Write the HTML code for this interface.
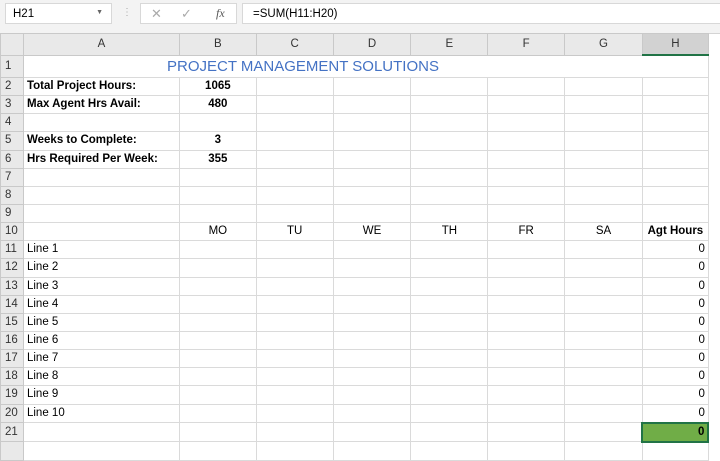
<!DOCTYPE html>
<html><head><style>
body{margin:0;width:720px;height:448px;overflow:hidden;background:#fff;font-family:"Liberation Sans",sans-serif;font-size:11.5px;color:#000;position:relative}
.top{position:absolute;left:0;top:0;width:720px;height:33px;background:#f3f3f3;border-bottom:1px solid #d4d4d4}
.nb{position:absolute;left:5px;top:3px;width:107px;height:21px;background:#fff;border:1px solid #d8d8d8;box-sizing:border-box;padding:4px 0 0 7px;font-size:11.5px}
.fb{position:absolute;left:140px;top:3px;width:97px;height:21px;background:#fff;border:1px solid #d8d8d8;box-sizing:border-box}
.fx{position:absolute;left:242px;top:3px;width:480px;height:21px;background:#fff;border:1px solid #d8d8d8;box-sizing:border-box;padding:4px 0 0 10px}
table{position:absolute;left:0;top:33px;border-collapse:collapse;table-layout:fixed}
td{border:1px solid #dadada;padding:0 3px;white-space:nowrap;overflow:visible;height:17.15px;line-height:17px}
tr.h td{background:#e9e9e9;text-align:center;height:20px;border-color:#c9c9c9;color:#333}
td.r{background:#e9e9e9;text-align:left;padding:0 0 0 4px;color:#333;border-color:#c9c9c9}
.b{font-weight:bold}.c{text-align:center}.rt{text-align:right}
</style></head><body>
<div class="top">
<div class="nb">H21<span style="position:absolute;right:8px;top:5px;font-size:7px;color:#666">▼</span></div>
<span style="position:absolute;left:122px;top:7px;color:#aaa;font-size:10px">⋮</span>
<div class="fb"><span style="position:absolute;left:10px;top:2px;color:#aaa;font-size:13px">✕</span><span style="position:absolute;left:40px;top:2px;color:#aaa;font-size:13px">✓</span><span style="position:absolute;left:75px;top:2px;color:#555;font-style:italic;font-family:'Liberation Serif',serif;font-size:12px">fx</span></div>
<div class="fx">=SUM(H11:H20)</div>
</div>
<table>
<colgroup><col style="width:23px"><col style="width:156px"><col style="width:77px"><col style="width:77px"><col style="width:78px"><col style="width:77px"><col style="width:77px"><col style="width:78px"><col style="width:66px"><col style="width:11px"></colgroup>
<tr class="h"><td style="background:#e9e9e9"></td><td>A</td><td>B</td><td>C</td><td>D</td><td>E</td><td>F</td><td>G</td><td style="background:#d2d2d2;border-bottom:2px solid #217346">H</td><td style="background:#fff;border:none"></td></tr>
<tr style="height:22px"><td class="r">1</td><td colspan="8" style="position:relative;height:21px"><span style="position:absolute;left:143px;top:2px;color:#4472c4;font-size:15px">PROJECT MANAGEMENT SOLUTIONS</span></td><td style="border:none"></td></tr>
<tr><td class="r">2</td><td class="b">Total Project Hours:</td><td class="b c">1065</td><td></td><td></td><td></td><td></td><td></td><td></td><td style="border:none"></td></tr>
<tr><td class="r">3</td><td class="b">Max Agent Hrs Avail:</td><td class="b c">480</td><td></td><td></td><td></td><td></td><td></td><td></td><td style="border:none"></td></tr>
<tr><td class="r">4</td><td></td><td></td><td></td><td></td><td></td><td></td><td></td><td></td><td style="border:none"></td></tr>
<tr><td class="r">5</td><td class="b">Weeks to Complete:</td><td class="b c">3</td><td></td><td></td><td></td><td></td><td></td><td></td><td style="border:none"></td></tr>
<tr><td class="r">6</td><td class="b">Hrs Required Per Week:</td><td class="b c">355</td><td></td><td></td><td></td><td></td><td></td><td></td><td style="border:none"></td></tr>
<tr><td class="r">7</td><td></td><td></td><td></td><td></td><td></td><td></td><td></td><td></td><td style="border:none"></td></tr>
<tr><td class="r">8</td><td></td><td></td><td></td><td></td><td></td><td></td><td></td><td></td><td style="border:none"></td></tr>
<tr><td class="r">9</td><td></td><td></td><td></td><td></td><td></td><td></td><td></td><td></td><td style="border:none"></td></tr>
<tr><td class="r">10</td><td></td><td class="c">MO</td><td class="c">TU</td><td class="c">WE</td><td class="c">TH</td><td class="c">FR</td><td class="c">SA</td><td class="b c">Agt Hours</td><td style="border:none"></td></tr>
<tr><td class="r">11</td><td>Line 1</td><td></td><td></td><td></td><td></td><td></td><td></td><td class="rt">0</td><td style="border:none"></td></tr>
<tr><td class="r">12</td><td>Line 2</td><td></td><td></td><td></td><td></td><td></td><td></td><td class="rt">0</td><td style="border:none"></td></tr>
<tr><td class="r">13</td><td>Line 3</td><td></td><td></td><td></td><td></td><td></td><td></td><td class="rt">0</td><td style="border:none"></td></tr>
<tr><td class="r">14</td><td>Line 4</td><td></td><td></td><td></td><td></td><td></td><td></td><td class="rt">0</td><td style="border:none"></td></tr>
<tr><td class="r">15</td><td>Line 5</td><td></td><td></td><td></td><td></td><td></td><td></td><td class="rt">0</td><td style="border:none"></td></tr>
<tr><td class="r">16</td><td>Line 6</td><td></td><td></td><td></td><td></td><td></td><td></td><td class="rt">0</td><td style="border:none"></td></tr>
<tr><td class="r">17</td><td>Line 7</td><td></td><td></td><td></td><td></td><td></td><td></td><td class="rt">0</td><td style="border:none"></td></tr>
<tr><td class="r">18</td><td>Line 8</td><td></td><td></td><td></td><td></td><td></td><td></td><td class="rt">0</td><td style="border:none"></td></tr>
<tr><td class="r">19</td><td>Line 9</td><td></td><td></td><td></td><td></td><td></td><td></td><td class="rt">0</td><td style="border:none"></td></tr>
<tr><td class="r">20</td><td>Line 10</td><td></td><td></td><td></td><td></td><td></td><td></td><td class="rt">0</td><td style="border:none"></td></tr>
<tr><td class="r">21</td><td></td><td></td><td></td><td></td><td></td><td></td><td></td><td class="rt b" style="background:#70ad47;border:2px solid #217346">0</td><td style="border:none"></td></tr>
<tr><td class="r"></td><td></td><td></td><td></td><td></td><td></td><td></td><td></td><td></td><td style="border:none"></td></tr>
</table>
</body></html>
